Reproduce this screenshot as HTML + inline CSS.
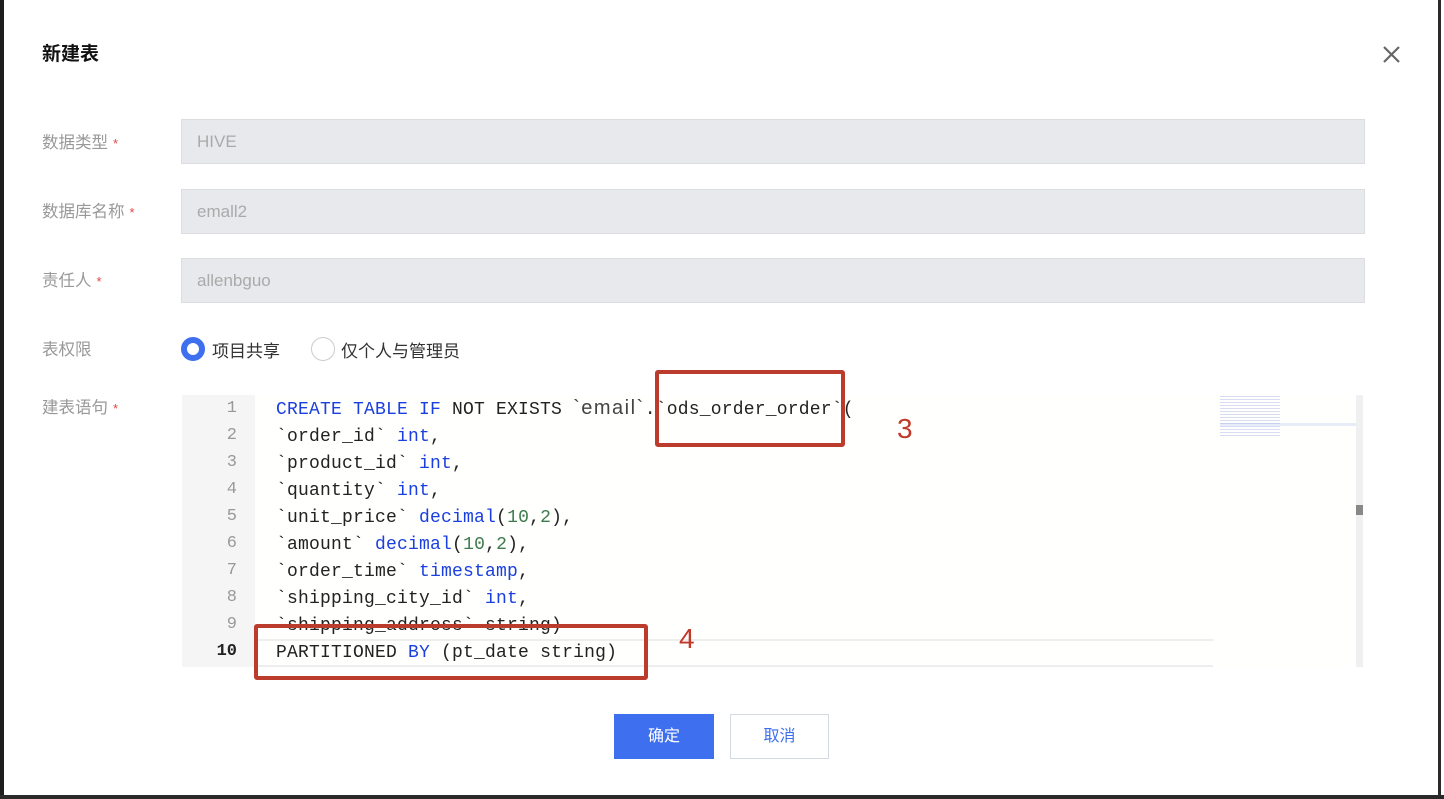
<!DOCTYPE html>
<html><head><meta charset="utf-8"><style>
*{margin:0;padding:0;box-sizing:border-box}
body{width:1444px;height:799px;background:#fff;position:relative;overflow:hidden;font-family:"Liberation Sans","Noto Sans CJK SC",sans-serif}
.a{position:absolute}
.lbl{position:absolute;left:42px;font-size:16.5px;color:#999;line-height:20px}
.lbl i{color:#e54545;font-style:normal;font-size:13px;margin-left:5px}
.inp{position:absolute;left:181px;width:1184px;height:45px;background:#e8e9ec;border:1px solid #dcdde1;color:#aaa;font-size:17px;line-height:43px;padding-left:15px}
.code{position:absolute;left:276px;font-family:"Liberation Mono",monospace;font-size:18px;letter-spacing:0.2px;color:#222;line-height:27px;white-space:pre}
.ln{position:absolute;left:182px;width:55px;text-align:right;font-family:"Liberation Mono",monospace;font-size:17px;color:#999;line-height:27px}
.k{color:#1a3fe0}.n{color:#3d7a4e}
.box{position:absolute;border:4px solid #bb3b2c;border-radius:3px}
.num{position:absolute;color:#c0392b;font-size:28px}
</style></head><body>
<div class="a" style="left:0;top:0;width:4px;height:799px;background:#1e1e1e"></div>
<div class="a" style="left:1438px;top:0;width:3px;height:799px;background:#2a2a2a"></div>
<div class="a" style="left:0;top:795px;width:1444px;height:4px;background:#2a2a2a"></div>

<div class="a" style="left:42px;top:39px;font-size:19px;font-weight:bold;color:#111">新建表</div>
<svg class="a" style="left:1382px;top:45px" width="19" height="19" viewBox="0 0 19 19"><path d="M2 2L17 17M17 2L2 17" stroke="#666" stroke-width="2.2"/></svg>

<div class="lbl" style="top:133px">数据类型<i>*</i></div>
<div class="inp" style="top:119px">HIVE</div>
<div class="lbl" style="top:202px">数据库名称<i>*</i></div>
<div class="inp" style="top:189px">emall2</div>
<div class="lbl" style="top:271px">责任人<i>*</i></div>
<div class="inp" style="top:258px">allenbguo</div>
<div class="lbl" style="top:340px">表权限</div>
<div class="a" style="left:181px;top:337px;width:24px;height:24px;border-radius:50%;border:6px solid #3d6fee;background:#fff"></div>
<div class="a" style="left:212px;top:337px;font-size:17px;color:#333">项目共享</div>
<div class="a" style="left:311px;top:337px;width:24px;height:24px;border-radius:50%;border:1px solid #ccc;background:#fff"></div>
<div class="a" style="left:341px;top:337px;font-size:17px;color:#333">仅个人与管理员</div>
<div class="lbl" style="top:398px">建表语句<i>*</i></div>

<div class="a" style="left:182px;top:395px;width:1183px;height:272px;background:#fffffd"></div>
<div class="a" style="left:182px;top:395px;width:73px;height:272px;background:#f5f5f5"></div>
<div class="a" style="left:255px;top:639px;width:958px;height:28px;border-top:2px solid #eee;border-bottom:2px solid #eee"></div>
<div class="a" style="left:1356px;top:395px;width:7px;height:272px;background:#f0f0f2"></div>
<div class="a" style="left:1356px;top:505px;width:7px;height:10px;background:#888"></div>
<div class="a" style="left:1220px;top:423px;width:136px;height:3px;background:#e6edf9"></div>
<div class="a" style="left:1220px;top:396px;width:60px;height:40px;background:repeating-linear-gradient(#7a8ad8 0 1px,transparent 1px 3px);opacity:.3"></div>

<div class="ln" style="top:395px">1<br>2<br>3<br>4<br>5<br>6<br>7<br>8<br>9<br><b style="color:#222">10</b></div>
<div class="code" style="top:395px"><span class="k">CREATE TABLE IF</span> NOT EXISTS <span style="font-family:'Liberation Sans',sans-serif;font-size:20px;letter-spacing:1.5px;color:#444">`email`</span>.`ods_order_order`(
`order_id` <span class="k">int</span>,
`product_id` <span class="k">int</span>,
`quantity` <span class="k">int</span>,
`unit_price` <span class="k">decimal</span>(<span class="n">10</span>,<span class="n">2</span>),
`amount` <span class="k">decimal</span>(<span class="n">10</span>,<span class="n">2</span>),
`order_time` <span class="k">timestamp</span>,
`shipping_city_id` <span class="k">int</span>,
`shipping_address` string)
PARTITIONED <span class="k">BY</span> (pt_date string)</div>

<div class="box" style="left:655px;top:370px;width:190px;height:77px"></div>
<div class="num" style="left:897px;top:413px">3</div>
<div class="box" style="left:254px;top:624px;width:394px;height:56px"></div>
<div class="num" style="left:679px;top:623px">4</div>

<div class="a" style="left:614px;top:714px;width:100px;height:45px;background:#3d6fee;color:#fff;font-size:16px;text-align:center;line-height:45px">确定</div>
<div class="a" style="left:730px;top:714px;width:99px;height:45px;background:#fff;border:1px solid #d5d9e2;color:#3d6fee;font-size:16px;text-align:center;line-height:43px">取消</div>
</body></html>
